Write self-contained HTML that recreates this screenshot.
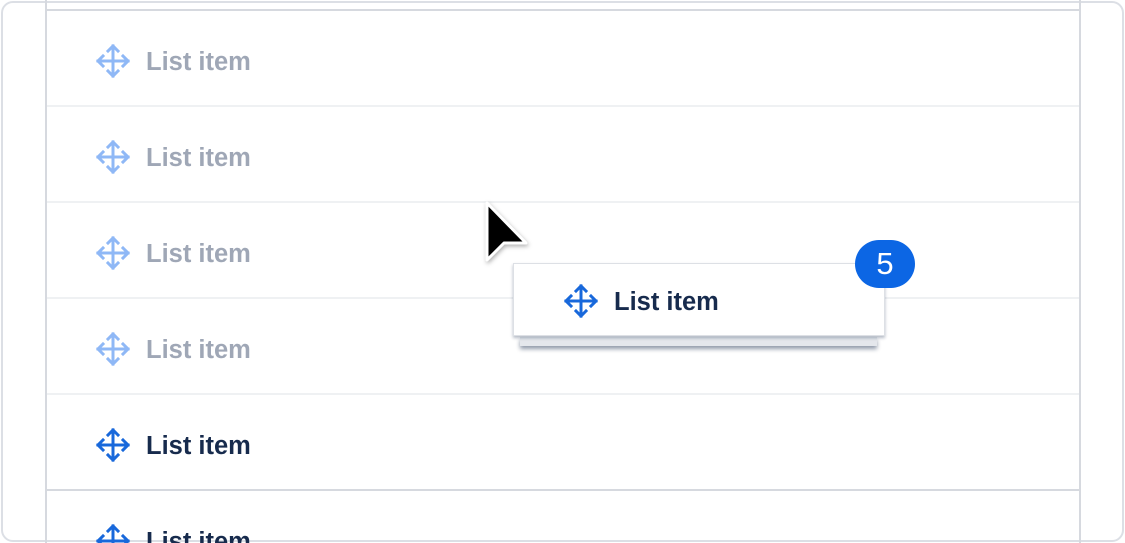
<!DOCTYPE html>
<html style="overflow:hidden;width:1125px;height:543px"><head><style>
*{margin:0;padding:0;box-sizing:border-box}
body{width:1125px;height:543px;background:#fff;position:relative;overflow:hidden;font-family:"Liberation Sans",sans-serif}
.outer{position:absolute;left:1px;top:1px;width:1123px;height:541px;border:2px solid #dcdfe5;border-radius:12px}
.col{position:absolute;left:45px;top:0;width:1036px;height:543px;border-left:2px solid #d6d9df;border-right:2px solid #d6d9df}
.hl{position:absolute;left:47px;width:1032px;height:2px}
.row{position:absolute;left:94px;height:40px;display:flex;align-items:center}
.row span{margin-left:14px;font-size:25.5px;font-weight:bold;position:relative;top:1px}
.f span{color:#9fa7b6}
.d span{color:#172b4d}
svg.ic{width:38px;height:38px}
.card{position:absolute;left:513px;top:263px;width:372px;height:73px;background:#fff;border:1px solid #dde0e5;box-shadow:0 2px 3px rgba(9,30,66,.3)}
.card2{position:absolute;left:520px;top:337px;width:357px;height:9px;background:#e4e7ec;box-shadow:0 3px 4px rgba(9,30,66,.45)}
.badge{position:absolute;left:855px;top:240px;width:60px;height:48px;border-radius:24px;background:#0c66e4;color:#fff;font-size:31px;text-align:center;line-height:48px}
</style></head><body>
<svg width="0" height="0" style="position:absolute"><defs>
<g id="mv" fill="none" stroke-width="3" stroke-linecap="square"><path d="M19 4V34M4 19H34M14 9L19 4L24 9M14 29L19 34L24 29M9 14L4 19L9 24M29 14L34 19L29 24"/></g>
</defs></svg>
<div class="outer"></div>
<div class="col"></div>
<div class="hl" style="top:9px;background:#d6d9df"></div>
<div class="hl" style="top:105px;background:#eff1f3"></div>
<div class="hl" style="top:201px;background:#eff1f3"></div>
<div class="hl" style="top:297px;background:#eff1f3"></div>
<div class="hl" style="top:393px;background:#eff1f3"></div>
<div class="hl" style="top:489px;background:#d6d9df"></div>
<div class="row f" style="top:41px"><svg class="ic" viewBox="0 0 38 38"><use href="#mv" stroke="#8fb8f6"/></svg><span>List item</span></div>
<div class="row f" style="top:137px"><svg class="ic" viewBox="0 0 38 38"><use href="#mv" stroke="#8fb8f6"/></svg><span>List item</span></div>
<div class="row f" style="top:233px"><svg class="ic" viewBox="0 0 38 38"><use href="#mv" stroke="#8fb8f6"/></svg><span>List item</span></div>
<div class="row f" style="top:329px"><svg class="ic" viewBox="0 0 38 38"><use href="#mv" stroke="#8fb8f6"/></svg><span>List item</span></div>
<div class="row d" style="top:425px"><svg class="ic" viewBox="0 0 38 38"><use href="#mv" stroke="#1868db"/></svg><span>List item</span></div>
<div class="row d" style="top:521px"><svg class="ic" viewBox="0 0 38 38"><use href="#mv" stroke="#1868db"/></svg><span>List item</span></div>
<div class="card2"></div>
<div class="card"><div class="row d" style="left:48px;top:17px"><svg class="ic" viewBox="0 0 38 38"><use href="#mv" stroke="#1868db"/></svg><span>List item</span></div></div>
<div class="badge">5</div>
<svg style="position:absolute;left:480px;top:198px" width="56" height="70" viewBox="0 0 56 70"><path d="M7 5L7 62L24 45L46 45Z" fill="#000" stroke="#fff" stroke-width="3" stroke-linejoin="round" style="filter:drop-shadow(1px 2px 2px rgba(0,0,0,.3))"/></svg>
</body></html>
